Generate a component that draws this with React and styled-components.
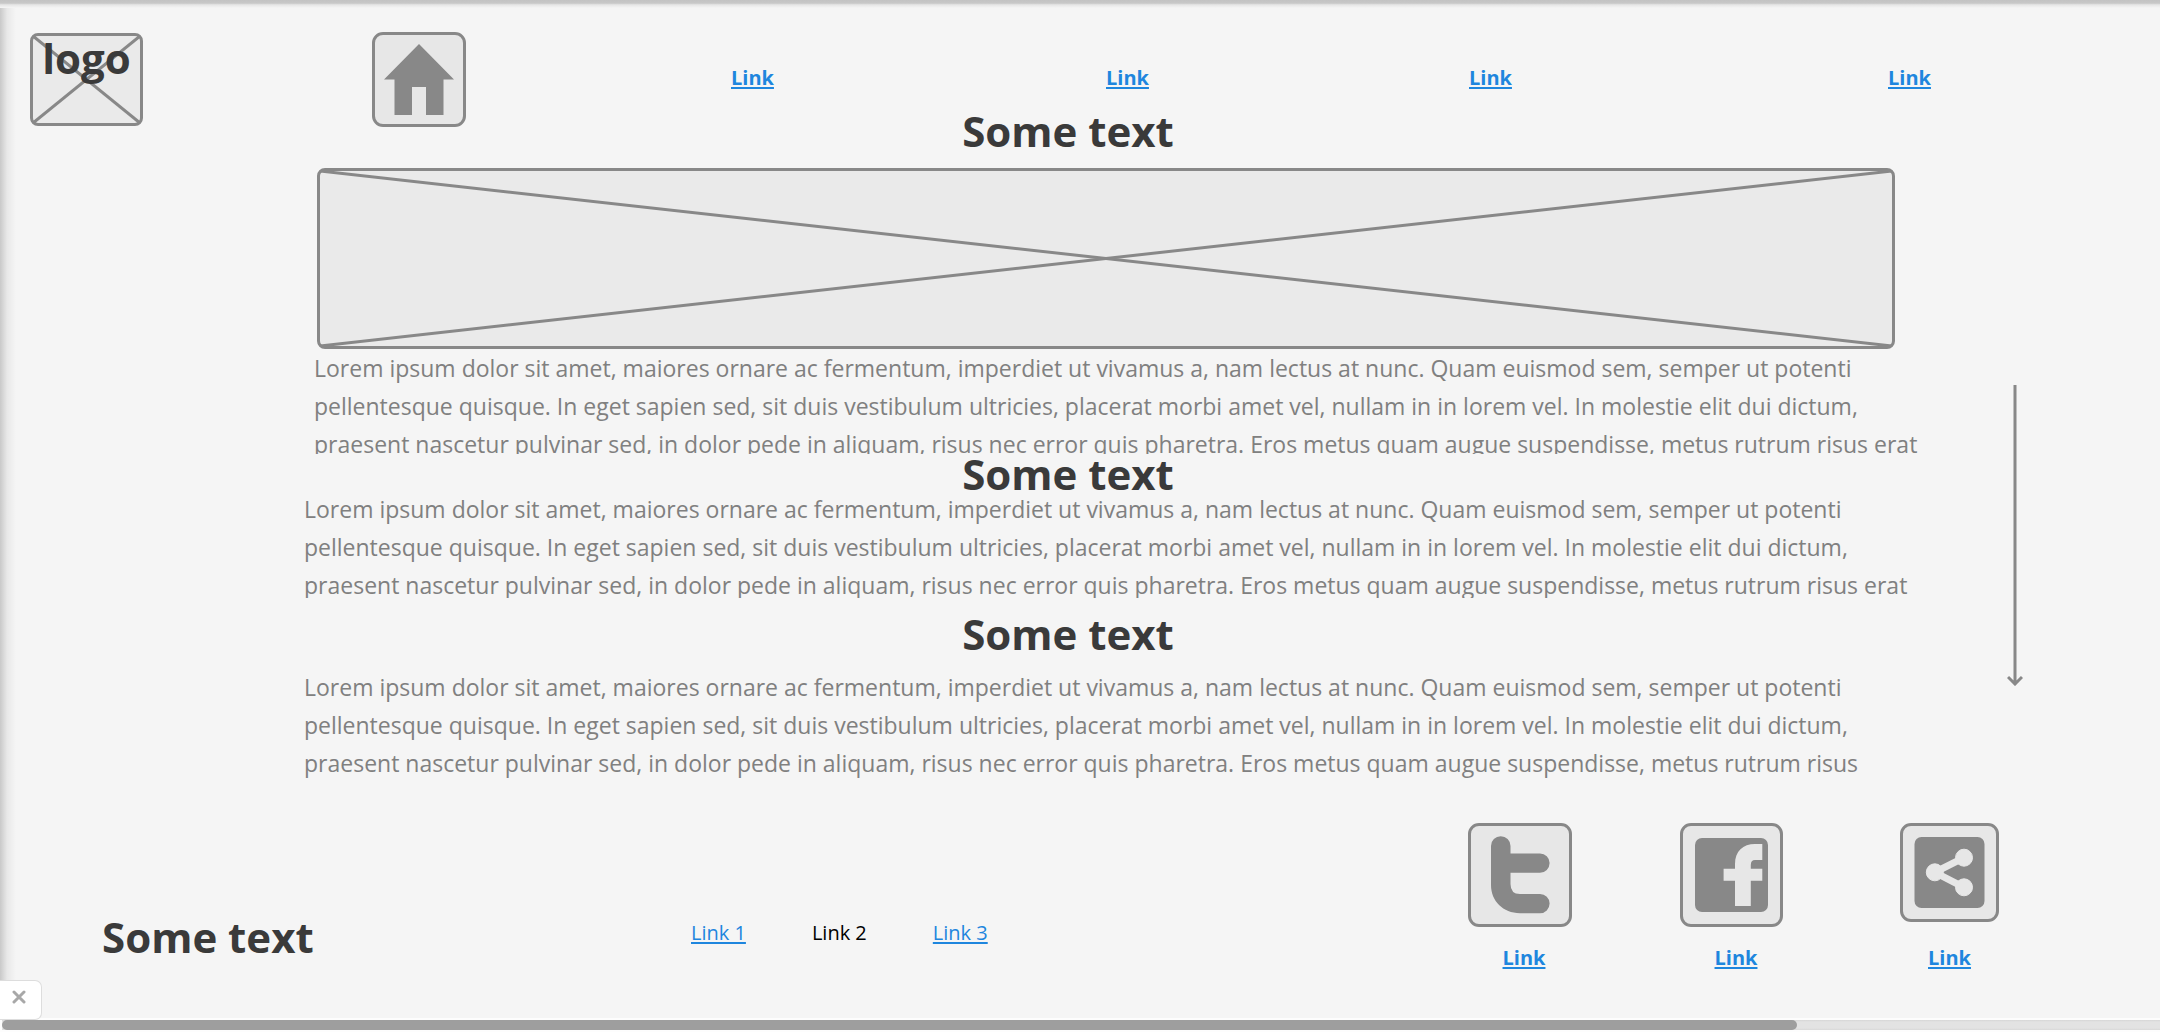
import React from "react";
import styled, { createGlobalStyle, css } from "styled-components";

const color = {
  page: "#f5f5f5",
  box: "#eaeaea",
  tile: "#e7e7e7",
  line: "#888888",
  body: "#808080",
  heading: "#3a3a3a",
  link: "#1e86de",
};

const GlobalStyle = createGlobalStyle`
  *, *::before, *::after { box-sizing: border-box; }
  body {
    margin: 0;
    background: ${color.page};
    font-family: "Open Sans", "Noto Sans", sans-serif;
  }
`;

const Page = styled.div`
  position: relative;
  display: flex;
  flex-direction: column;
  min-height: 100vh;
  overflow: hidden;
`;

const TopShade = styled.div`
  position: absolute;
  inset: 0 0 auto 0;
  height: 8px;
  background: linear-gradient(#c3c3c3 0, #c8c8c8 40%, #e6e6e6 60%, rgba(245, 245, 245, 0) 100%);
`;

const LeftShade = styled.div`
  position: absolute;
  inset: 8px auto 12px 0;
  width: 16px;
  background: linear-gradient(90deg, rgba(0, 0, 0, 0.18), rgba(0, 0, 0, 0.05) 45%, rgba(0, 0, 0, 0));
`;

const Header = styled.header`
  display: grid;
  grid-template-columns: 342fr 1788fr;
  align-items: center;
  padding: 32px 0 0 30px;
`;

const Placeholder = styled.div`
  position: relative;
  background: ${color.box};
  border: 3px solid ${color.line};
  border-radius: 8px;
`;

const Logo = styled(Placeholder)`
  width: 113px;
  height: 93px;
  padding-top: 6px;
  text-align: center;
`;

const Hero = styled(Placeholder)`
  height: 181px;
  margin: 21px 15px 0 13px;
`;

const Cross = styled.svg`
  position: absolute;
  inset: 0;
  width: 100%;
  height: 100%;

  line {
    stroke: ${color.line};
    stroke-width: 3px;
  }
`;

const headingText = css`
  margin: 0;
  color: ${color.heading};
  font-size: 42px;
  line-height: 32px;
  font-weight: 700;
  white-space: nowrap;
`;

const LogoText = styled.span`
  ${headingText}
  position: relative;
  display: block;
`;

const Heading = styled.h2`
  ${headingText}
`;

const SectionHeading = styled(Heading)`
  padding-right: 78px;
  margin-top: ${(p) => p.$gap || 0}px;
  text-align: center;
`;

const Link = styled.a`
  justify-self: start;
  color: ${(p) => (p.$plain ? "#000000" : color.link)};
  font-size: 20px;
  line-height: 24px;
  font-weight: ${(p) => (p.$strong ? 700 : 400)};
  text-decoration: ${(p) => (p.$plain ? "none" : "underline")};
  text-decoration-thickness: 2px;
  text-underline-offset: 2px;
  white-space: nowrap;
`;

const Nav = styled.nav`
  display: grid;
  grid-template-columns: 359fr 375fr 363fr 419fr 272fr;
  align-items: center;

  ${Link} {
    padding-bottom: 4px;
  }
`;

const Tile = styled.a`
  display: block;
  width: ${(p) => p.$width}px;
  height: ${(p) => p.$height}px;
  background: ${color.tile};
  border: 3px solid ${color.line};
  border-radius: 11px;

  svg {
    display: block;
    width: calc(100% + 6px);
    height: calc(100% + 6px);
    margin: -3px;
    fill: ${color.line};
  }
`;

const Main = styled.main`
  display: grid;
  grid-template-columns: 304fr 1606fr 250fr;
  margin-top: -12px;
`;

const Article = styled.div`
  grid-column: 2;
  min-width: 0;
`;

const Paragraph = styled.p`
  height: ${(p) => (p.$height ? `${p.$height}px` : "auto")};
  margin: ${(p) => p.$gap || 0}px 0 0 ${(p) => (p.$indent ? 10 : 0)}px;
  overflow-y: clip;
  color: ${color.body};
  font-size: 23px;
  line-height: 38px;
  white-space: nowrap;
`;

const ScrollArrow = styled.svg`
  justify-self: center;
  width: 56px;
  height: 301px;
  margin-top: 270px;
  padding-right: 40px;
  fill: none;
  stroke: ${color.line};
  stroke-width: 3;
`;

const Footer = styled.footer`
  display: grid;
  grid-template-columns: 589fr 777fr 692fr;
  align-items: start;
  padding-left: 102px;
  margin-top: 41px;
`;

const FooterCell = styled.div`
  display: flex;
  gap: 66px;
  padding-top: 98px;
`;

const Social = styled.div`
  display: grid;
  grid-template-columns: 212fr 220fr 260fr;
`;

const SocialItem = styled.div`
  display: flex;
  flex-direction: column;
  justify-content: space-between;
  justify-self: start;
  gap: 19px;
  min-width: ${(p) => (p.$wide ? 112 : 99)}px;

  ${Link} {
    align-self: center;
  }
`;

const Bottom = styled.div`
  position: relative;
  margin-top: auto;
  padding: 2px 0 2px 2px;
  background: #fdfdfd;
`;

const Track = styled.div`
  height: 10px;
  background: linear-gradient(#d6d6d6, #e3e3e3 20%, #e3e3e3 80%, #d8d8d8);
`;

const Thumb = styled.div`
  width: 83.2%;
  height: 10px;
  border-radius: 5px;
  background: #9e9e9e;
`;

const CloseButton = styled.button`
  position: absolute;
  left: 0;
  bottom: 12px;
  display: flex;
  width: 42px;
  height: 40px;
  padding: 9px 0 0 12px;
  background: #ffffff;
  border: 1px solid #dddddd;
  border-left: 0;
  border-radius: 0 7px 7px 0;

  svg {
    width: 14px;
    height: 14px;
    stroke: #a8a8a8;
    stroke-width: 3;
    stroke-linecap: round;
  }
`;

const CrossLines = () => (
  <Cross aria-hidden="true">
    <line x1="0" y1="0" x2="100%" y2="100%" />
    <line x1="0" y1="100%" x2="100%" y2="0" />
  </Cross>
);

const HomeIcon = () => (
  <svg viewBox="0 0 94 95">
    <path d="M47 12 82 47.500H71.500V83H54V55H40V83H22.500V47.500H12Z" />
  </svg>
);

const TwitterIcon = () => (
  <svg viewBox="0 0 104 104">
    <path d="M23 23a9.750 9.750 0 0 1 19.500 0V30.500H72a9.600 9.600 0 0 1 0 19.200H42.500V61Q42.500 71 52 71H72a9.600 9.600 0 0 1 0 19.200H52C35 90 23 78 23 62Z" />
  </svg>
);

const FacebookIcon = () => (
  <svg viewBox="0 0 103 104">
    <rect x="15" y="15" width="73" height="74" rx="7" />
    <path
      fill={color.tile}
      d="M55 83V57.700H43.600V45.700H55V41C55 28 63 21 75 21H82.300V37H75Q70.800 37 70.800 42V45.700H82.300V57.700H70.800V83Z"
    />
  </svg>
);

const ShareIcon = () => (
  <svg viewBox="0 0 99 99">
    <rect x="14.500" y="14" width="70" height="71" rx="7" />
    <g fill={color.tile} stroke={color.tile}>
      <path fill="none" strokeWidth="7" d="M64 34.700 34.800 49.300 64 64.300" />
      <circle cx="34.800" cy="49.300" r="8.500" />
      <circle cx="64" cy="34.700" r="8.500" />
      <circle cx="64" cy="64.300" r="8.500" />
    </g>
  </svg>
);

const lines = [
  "Lorem ipsum dolor sit amet, maiores ornare ac fermentum, imperdiet ut vivamus a, nam lectus at nunc. Quam euismod sem, semper ut potenti",
  "pellentesque quisque. In eget sapien sed, sit duis vestibulum ultricies, placerat morbi amet vel, nullam in in lorem vel. In molestie elit dui dictum,",
  "praesent nascetur pulvinar sed, in dolor pede in aliquam, risus nec error quis pharetra. Eros metus quam augue suspendisse, metus rutrum risus",
];

const Lorem = ({ tail = "" }) => (
  <>
    {lines[0]}
    <br />
    {lines[1]}
    <br />
    {lines[2]}
    {tail}
  </>
);

const social = [
  { name: "Twitter", Icon: TwitterIcon, width: 104, height: 104, wide: true },
  { name: "Facebook", Icon: FacebookIcon, width: 103, height: 104, wide: true },
  { name: "Share", Icon: ShareIcon, width: 99, height: 99, wide: false },
];

export default function App() {
  return (
    <Page>
      <GlobalStyle />
      <TopShade />
      <LeftShade />
      <Header>
        <Logo>
          <CrossLines />
          <LogoText>logo</LogoText>
        </Logo>
        <Nav>
          <Tile href="#home" aria-label="Home" $width={94} $height={95}>
            <HomeIcon />
          </Tile>
          <Link href="#a" $strong>Link</Link>
          <Link href="#b" $strong>Link</Link>
          <Link href="#c" $strong>Link</Link>
          <Link href="#d" $strong>Link</Link>
        </Nav>
      </Header>

      <Main>
        <Article>
          <SectionHeading>Some text</SectionHeading>
          <Hero>
            <CrossLines />
          </Hero>
          <Paragraph $indent $height={105}>
            <Lorem tail=" erat" />
          </Paragraph>
          <SectionHeading $gap={4}>Some text</SectionHeading>
          <Paragraph $height={108}>
            <Lorem tail=" erat" />
          </Paragraph>
          <SectionHeading $gap={20}>Some text</SectionHeading>
          <Paragraph $gap={18}>
            <Lorem />
          </Paragraph>
        </Article>
        <ScrollArrow viewBox="0 0 16 301" aria-hidden="true">
          <path d="M8 0V298M1 292 8 299 15 292" />
        </ScrollArrow>
      </Main>

      <Footer>
        <FooterCell>
          <Heading>Some text</Heading>
        </FooterCell>
        <FooterCell>
          <Link href="#1">Link 1</Link>
          <Link href="#2" $plain>Link 2</Link>
          <Link href="#3">Link 3</Link>
        </FooterCell>
        <Social>
          {social.map(({ name, Icon, width, height, wide }) => (
            <SocialItem key={name} $wide={wide}>
              <Tile href={`#${name}`} aria-label={name} $width={width} $height={height}>
                <Icon />
              </Tile>
              <Link href={`#${name}-page`} $strong>Link</Link>
            </SocialItem>
          ))}
        </Social>
      </Footer>

      <Bottom>
        <Track>
          <Thumb />
        </Track>
        <CloseButton type="button" aria-label="Close">
          <svg viewBox="0 0 14 14">
            <path d="M2 2 12 12M12 2 2 12" />
          </svg>
        </CloseButton>
      </Bottom>
    </Page>
  );
}
